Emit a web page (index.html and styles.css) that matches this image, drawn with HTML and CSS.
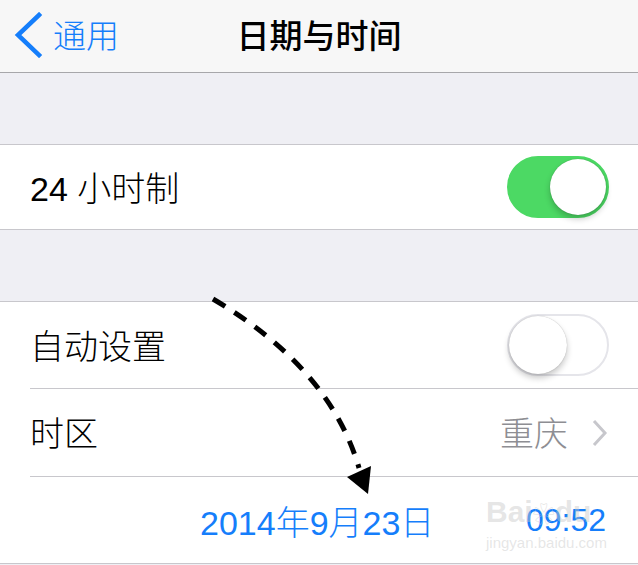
FILE: index.html
```html
<!DOCTYPE html>
<html lang="zh-CN">
<head>
    <meta charset="UTF-8">
    <title>日期与时间</title>
    <link rel="stylesheet" href="styles.css">
</head>
<body>
    <div class="screen">
        <div class="navbar">
            <a class="back" href="#">
                <svg class="back-icon" width="30" height="46" viewBox="0 0 30 46">
                    <path d="M26 3 L5 23 L26 43" fill="none" stroke="#157efb" stroke-width="4.5" stroke-linecap="square"/>
                </svg>
                <span>通用</span>
            </a>
            <div class="title">日期与时间</div>
        </div>

        <div class="spacer"></div>
        <div class="group">
            <div class="row first">
                <span class="label">24 小时制</span>
                <div class="switch on"><div class="knob"></div></div>
            </div>
        </div>

        <div class="spacer"></div>
        <div class="group">
            <div class="row">
                <span class="label">自动设置</span>
                <div class="switch"><div class="knob"></div></div>
            </div>
            <div class="row tall">
                <span class="label">时区</span>
                <span class="detail">重庆</span>
                <svg class="chevron" width="16" height="28" viewBox="0 0 16 28">
                    <path d="M2 2 L13 14 L2 26" fill="none" stroke="#c7c7cc" stroke-width="3"/>
                </svg>
            </div>
            <div class="row date-row">
                <span class="date">2014年9月23日</span>
                <span class="time">09:52</span>
            </div>
        </div>

        <!-- 标注箭头 -->
        <svg class="arrow" width="638" height="565" viewBox="0 0 638 565">
            <path d="M213 299 Q330 368 359 468" fill="none" stroke="#000" stroke-width="5" stroke-dasharray="14 11"/>
            <polygon points="347,477 371,466 368,494" fill="#000"/>
        </svg>

        <!-- 水印 -->
        <div class="watermark">
            <div class="wm-logo">Bai<span class="paw">❀</span>du</div>
            <div class="wm-url">jingyan.baidu.com</div>
        </div>
    </div>
</body>
</html>
```

FILE: styles.css
```css
body {
    margin: 0;
    font-family: 'Liberation Sans', 'Noto Sans CJK SC', sans-serif;
    background-color: #efeff4;
}
.screen {
    position: relative;
    width: 638px;
    height: 565px;
    overflow: hidden;
    background-color: #efeff4;
}
.navbar {
    height: 72px;
    background-color: #f7f7f7;
    border-bottom: 1px solid #a7a7aa;
    display: flex;
    align-items: center;
    position: relative;
}
.back {
    display: flex;
    align-items: center;
    gap: 10px;
    padding-left: 13px;
    color: #157efb;
    text-decoration: none;
    font-size: 33px;
    font-weight: 300;
    margin-top: -2px;
}
.back span {
    margin-top: -3px;
}
.title {
    position: absolute;
    left: 0;
    right: 0;
    top: 10px;
    text-align: center;
    font-size: 33px;
    color: #000;
    font-weight: 500;
}
.spacer {
    height: 71px;
}
.group {
    background-color: #fff;
    border-top: 1px solid #c8c7cc;
    border-bottom: 1px solid #c8c7cc;
    padding-left: 30px;
}
.row {
    height: 86px;
    display: flex;
    align-items: center;
    padding-right: 28px;
    border-bottom: 1px solid #c8c7cc;
}
.row.first {
    height: 84px;
}
.row.tall {
    height: 87px;
}
.row:last-child {
    border-bottom: none;
}
.label {
    flex: 1;
    font-size: 34px;
    font-weight: 300;
    color: #000;
    margin-top: -2px;
}
.detail {
    font-size: 34px;
    font-weight: 300;
    color: #8e8e93;
    margin-right: 24px;
    margin-top: -2px;
}
.chevron {
    margin-right: 2px;
}
.switch {
    width: 102px;
    height: 62px;
    box-sizing: border-box;
    border-radius: 31px;
    border: 2px solid #e5e5ea;
    background-color: #fff;
    position: relative;
    margin-right: 1px;
}
.switch.on {
    background-color: #4cd964;
    border-color: #4cd964;
}
.knob {
    position: absolute;
    top: 0;
    left: 0;
    width: 58px;
    height: 58px;
    border-radius: 50%;
    background-color: #fff;
    box-shadow: 0 4px 6px rgba(0, 0, 0, 0.22), 0 0 1px rgba(0, 0, 0, 0.3);
}
.switch.on .knob {
    left: auto;
    right: 1px;
    top: 1px;
    width: 56px;
    height: 56px;
}
.date-row {
    padding-left: 170px;
    color: #157efb;
}
.date {
    flex: 1;
    font-size: 34px;
    font-weight: 300;
}
.time {
    font-size: 32px;
    margin-right: 4px;
}
.arrow {
    position: absolute;
    top: 0;
    left: 0;
    pointer-events: none;
}
.watermark {
    position: absolute;
    left: 486px;
    top: 497px;
    color: rgba(200, 200, 200, 0.45);
    pointer-events: none;
}
.wm-logo {
    font-size: 30px;
    font-weight: bold;
    line-height: 30px;
}
.paw {
    font-size: 22px;
}
.wm-url {
    font-size: 15px;
    margin-top: 4px;
}
```
